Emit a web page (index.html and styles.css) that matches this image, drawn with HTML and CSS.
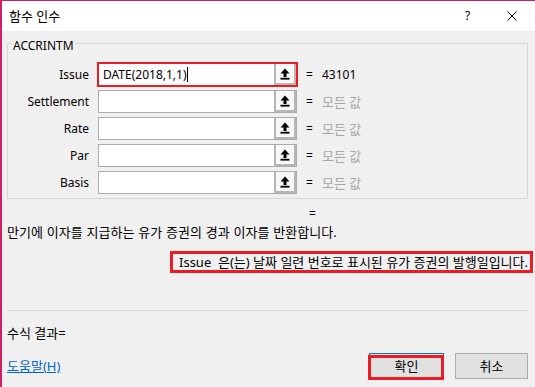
FILE: index.html
```html
<!DOCTYPE html>
<html lang="ko">
<head>
<meta charset="UTF-8" />
<meta name="viewport" content="width=device-width, initial-scale=1.0" />
<title>함수 인수</title>
<link rel="stylesheet" href="styles.css">
</head>
<body>
<div class="dialog">
  <div class="titlebar">
    <span class="title ko">함수 인수</span>
    <span class="help">?</span>
    <svg class="close" width="10" height="10" viewBox="0 0 10 10"><path d="M0.5 0.5 L9.5 9.5 M9.5 0.5 L0.5 9.5" stroke="#000" stroke-width="1" fill="none"/></svg>
  </div>
  <div class="content">
    <fieldset class="args">
      <legend>ACCRINTM</legend>
      <div class="grid">
        <label>Issue</label>
        <div class="field active">
          <span class="text">DATE(2018,1,1)<span class="caret"></span></span>
          <span class="pick"><svg width="10" height="12" viewBox="0 0 10 12"><path d="M5 0.5 L9.5 5.5 H6.5 V9 H3.5 V5.5 H0.5 Z"/><rect x="0.5" y="9.8" width="9" height="1.8"/></svg></span>
        </div>
        <span class="eq">=</span>
        <span class="res">43101</span>

        <label>Settlement</label>
        <div class="field">
          <span class="text"></span>
          <span class="pick"><svg width="10" height="12" viewBox="0 0 10 12"><path d="M5 0.5 L9.5 5.5 H6.5 V9 H3.5 V5.5 H0.5 Z"/><rect x="0.5" y="9.8" width="9" height="1.8"/></svg></span>
        </div>
        <span class="eq">=</span>
        <span class="res any ko">모든 값</span>

        <label>Rate</label>
        <div class="field">
          <span class="text"></span>
          <span class="pick"><svg width="10" height="12" viewBox="0 0 10 12"><path d="M5 0.5 L9.5 5.5 H6.5 V9 H3.5 V5.5 H0.5 Z"/><rect x="0.5" y="9.8" width="9" height="1.8"/></svg></span>
        </div>
        <span class="eq">=</span>
        <span class="res any ko">모든 값</span>

        <label>Par</label>
        <div class="field">
          <span class="text"></span>
          <span class="pick"><svg width="10" height="12" viewBox="0 0 10 12"><path d="M5 0.5 L9.5 5.5 H6.5 V9 H3.5 V5.5 H0.5 Z"/><rect x="0.5" y="9.8" width="9" height="1.8"/></svg></span>
        </div>
        <span class="eq">=</span>
        <span class="res any ko">모든 값</span>

        <label>Basis</label>
        <div class="field">
          <span class="text"></span>
          <span class="pick"><svg width="10" height="12" viewBox="0 0 10 12"><path d="M5 0.5 L9.5 5.5 H6.5 V9 H3.5 V5.5 H0.5 Z"/><rect x="0.5" y="9.8" width="9" height="1.8"/></svg></span>
        </div>
        <span class="eq">=</span>
        <span class="res any ko">모든 값</span>
      </div>
    </fieldset>

    <div class="total">=</div>
    <p class="desc ko">만기에 이자를 지급하는 유가 증권의 경과 이자를 반환합니다.</p>
    <div class="argdesc ko">Issue&nbsp; 은(는) 날짜 일련 번호로 표시된 유가 증권의 발행일입니다.</div>

    <div class="sep"></div>
    <div class="result ko">수식 결과=</div>

    <div class="footer">
      <a class="helplink ko" href="#">도움말(H)</a>
      <button class="btn ok ko">확인</button>
      <button class="btn cancel ko">취소</button>
    </div>
  </div>
</div>
</body>
</html>
```

FILE: styles.css
```css
* {
  box-sizing: border-box;
}
body {
  margin: 0;
  font-family: "Noto Sans", "Noto Sans CJK KR", sans-serif;
  font-size: 12px;
  line-height: 16px;
  color: #000;
  background: #f0f0f0;
}
.ko {
  font-size: 13px;
}
.dialog {
  width: 535px;
  height: 387px;
  background: #f0f0f0;
  border-top: 1px solid #cf1f67;
  border-left: 2px solid #cf1f67;
  overflow: hidden;
}
.titlebar {
  height: 30px;
  background: #fff;
  display: flex;
  align-items: center;
  padding-left: 7px;
}
.title {
  flex: 1;
}
.help {
  width: 6px;
  margin-right: 36px;
}
.close {
  margin-right: 18px;
}
.content {
  padding: 0 7px 0 5px;
}
.args {
  margin: 1px 0 0;
  padding: 9px 4px 4px;
  border: 1px solid #d7d7d7;
  min-width: 0;
}
.args legend {
  padding: 6px 1px 0;
  line-height: 16px;
}
.grid {
  display: grid;
  grid-template-columns: 77px 199px 7px auto;
  grid-auto-rows: 23px;
  column-gap: 9px;
  row-gap: 4px;
  align-items: center;
}
.grid label {
  text-align: right;
}
.field {
  display: flex;
  height: 23px;
  border: 1px solid #acacac;
  background: #fff;
}
.field.active {
  outline: 2px solid #ed1c24;
  outline-offset: -1px;
}
.field .text {
  flex: 1;
  padding-left: 4px;
  line-height: 21px;
  white-space: nowrap;
}
.caret {
  display: inline-block;
  width: 1px;
  height: 15px;
  background: #000;
  vertical-align: -3px;
}
.pick {
  width: 22px;
  display: flex;
  align-items: center;
  justify-content: center;
  background: #f7f7f7;
  border-left: 2px solid #b6b6b6;
  border-right: 2px solid #b6b6b6;
  border-bottom: 2px solid #b6b6b6;
}
.pick svg {
  fill: #000;
}
.res.any {
  color: #a6a6a6;
}
.total {
  margin-top: 7px;
  padding-left: 302px;
}
.desc {
  margin: 2px 0 0;
  word-spacing: 0.5px;
}
.argdesc {
  margin: 11px 0 0 163px;
  width: 363px;
  height: 22px;
  border: 3px solid #ed1c24;
  padding-left: 6px;
  white-space: nowrap;
  line-height: 16px;
}
.sep {
  margin-top: 37px;
  height: 1px;
  background: #dadada;
}
.result {
  margin-top: 14px;
}
.footer {
  display: flex;
  align-items: center;
  margin-top: 12px;
}
.helplink {
  flex: 1;
  color: #0066cc;
  text-decoration: underline;
}
.btn {
  height: 26px;
  padding: 0;
  font-family: inherit;
  line-height: 16px;
  color: #000;
  background: #e1e1e1;
  border: 1px solid #adadad;
}
.btn.ok {
  position: relative;
  width: 75px;
  border-color: #0078d7;
}
.btn.ok::after {
  content: "";
  position: absolute;
  left: -2px;
  right: -1px;
  top: 1px;
  bottom: -2px;
  border: 3px solid #ed1c24;
}
.btn.cancel {
  width: 73px;
  margin-left: 11px;
}
```
